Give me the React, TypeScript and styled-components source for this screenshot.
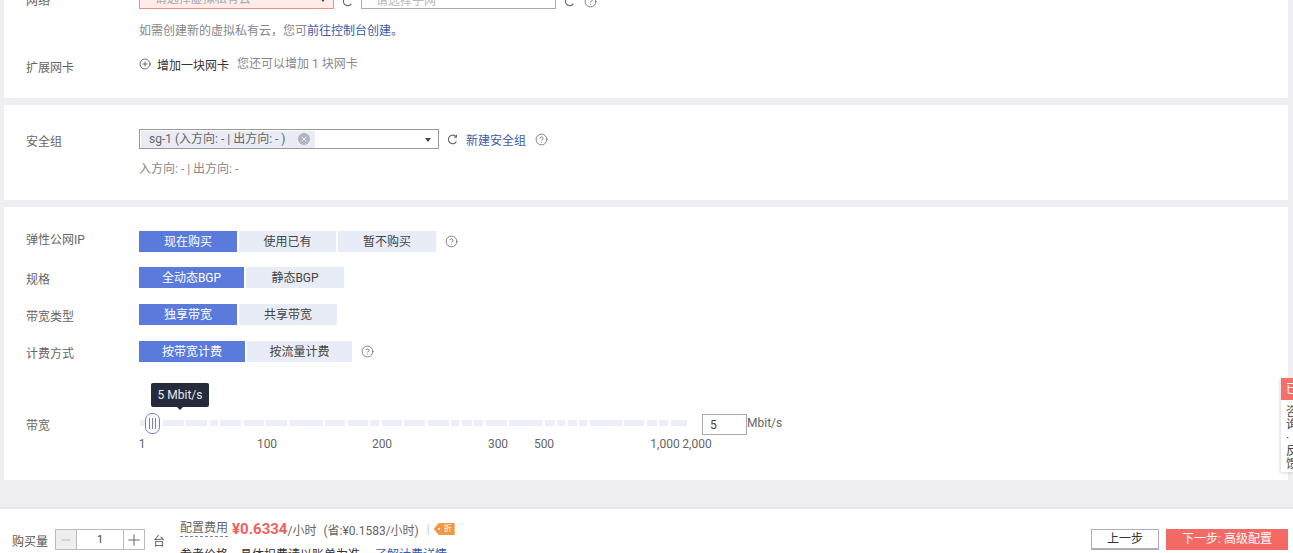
import React from "react";
import styled, { createGlobalStyle } from "styled-components";
import { CircleHelp, CirclePlus, X, Minus, Plus } from "lucide-react";

const Global = createGlobalStyle`
  html, body { margin: 0; padding: 0; height: 553px; overflow: hidden; background: #eeeef3; }
  body { font-family: Roboto, "Noto Sans CJK SC", "Liberation Sans", sans-serif; font-size: 12px; color: #666; }
  * { box-sizing: border-box; }
`;

const Page = styled.div`
  position: relative;
  width: 1293px;
  height: 553px;
  overflow: hidden;
  display: flex;
  flex-direction: column;
`;
const Main = styled.main`
  height: 527px;
  margin-top: -20px;
  padding: 0 5px 0 4px;
  display: flex;
  flex-direction: column;
  gap: 7px;
  flex: none;
`;
const Card = styled.section<{ $h: number; $pt: number }>`
  height: ${(p) => p.$h}px;
  padding: ${(p) => p.$pt}px 0 0 22px;
  background: #fff;
  flex: none;
  display: flex;
  flex-direction: column;
`;
const Field = styled.div<{ $mt?: number; $h?: number }>`
  display: flex;
  align-items: flex-start;
  margin-top: ${(p) => p.$mt ?? 0}px;
  height: ${(p) => (p.$h ? `${p.$h}px` : "auto")};
`;
const Label = styled.div<{ $pt?: number }>`
  width: 113px;
  flex: none;
  padding-top: ${(p) => p.$pt ?? 0}px;
  line-height: 18px;
  color: #666;
`;
const Controls = styled.div<{ $end?: boolean }>`
  display: flex;
  align-items: ${(p) => (p.$end ? "flex-end" : "center")};
`;
const Select = styled.div<{ $w: number; $h: number; $error?: boolean }>`
  width: ${(p) => p.$w}px;
  height: ${(p) => p.$h}px;
  display: flex;
  align-items: ${(p) => (p.$error ? "flex-end" : "center")};
  position: relative;
  padding: ${(p) => (p.$error ? "0 0 2px 8px" : "0 1px")};
  line-height: 14px;
  background: ${(p) => (p.$error ? "#fdecea" : "#fff")};
  border: 1px solid ${(p) => (p.$error ? "#ee8f80" : "#999")};
  color: ${(p) => (p.$error ? "#aaa" : "#666")};
`;
const Arrow = styled.span`
  position: absolute;
  right: 7px;
  bottom: 6px;
  width: 0;
  height: 0;
  border: 3px solid transparent;
  border-top: 4px solid #444;
  border-bottom: 0;
`;
const PlainInput = styled.div`
  width: 195px;
  height: 24px;
  margin-left: 8px;
  padding: 8px 0 0 14px;
  line-height: 14px;
  border: 1px solid #aaa;
  color: #bbb;
`;
const RefreshSvg = styled.svg<{ $mb?: number }>`
  width: 11px;
  height: 11px;
  margin: 0 0 ${(p) => p.$mb ?? 0}px 8px;
  color: #666;
  flex: none;
`;
const Refresh = ({ $mb }: { $mb?: number }) => (
  <RefreshSvg $mb={$mb} viewBox="0 0 11 11" fill="none" stroke="currentColor" strokeWidth="1.1">
    <path d="M9 2.6A4.3 4.3 0 1 0 9.4 7.6" />
    <path d="M9.4 0.8V3.2H7" />
  </RefreshSvg>
);
const Help = styled(CircleHelp).attrs({ strokeWidth: 1.5 })<{ $ml?: number; $mb?: number }>`
  width: 13px;
  height: 13px;
  margin: 0 0 ${(p) => p.$mb ?? 0}px ${(p) => p.$ml ?? 8}px;
  color: #666;
  flex: none;
`;
const Hint = styled.div<{ $mt?: number }>`
  margin-top: ${(p) => p.$mt ?? 0}px;
  line-height: 18px;
  color: #888;
`;
const Link = styled.a`
  color: #3e5aa8;
`;
const AddIcon = styled(CirclePlus).attrs({ strokeWidth: 1.5 })`
  width: 12px;
  height: 12px;
  margin-right: 6px;
  color: #444;
`;
const AddText = styled.span`
  color: #333;
  margin-right: 8px;
`;
const Tag = styled.div`
  height: 17px;
  padding: 0 5px 0 8px;
  display: flex;
  align-items: center;
  gap: 12px;
  line-height: 17px;
  background: #e9ecf4;
  white-space: nowrap;
`;
const TagClose = styled.span`
  width: 12px;
  height: 12px;
  border-radius: 50%;
  background: #b0b4be;
  display: flex;
  align-items: center;
  justify-content: center;
  color: #e9ecf4;
`;
const NewLink = styled(Link)`
  margin-left: 8px;
`;
const ToggleRow = styled.div`
  display: flex;
  align-items: center;
  gap: 2px;
`;
const Toggle = styled.button<{ $w: number; $on?: boolean }>`
  width: ${(p) => p.$w}px;
  height: 21px;
  padding: 1px 0 0;
  border: 0;
  font: inherit;
  line-height: 20px;
  text-align: center;
  background: ${(p) => (p.$on ? "#5b7bdc" : "#e8ecf7")};
  color: ${(p) => (p.$on ? "#fff" : "#444")};
`;
const SliderWrap = styled.div`
  position: relative;
  width: 548px;
  height: 40px;
  flex: none;
`;
const Track = styled.div`
  position: absolute;
  left: 1px;
  right: 0;
  top: 6px;
  height: 6px;
  display: flex;
  gap: 2.5px;
  overflow: hidden;
`;
const Segment = styled.span<{ $w: number }>`
  flex: none;
  width: ${(p) => p.$w}px;
  background: #ebeef9;
`;
const Handle = styled.div`
  position: absolute;
  left: 6px;
  top: -1px;
  width: 15px;
  height: 21px;
  border: 1.5px solid #6a86c9;
  border-radius: 7px;
  background: #fff;
  display: flex;
  align-items: center;
  justify-content: center;
  gap: 1.5px;
`;
const Grip = styled.i`
  display: block;
  width: 1.5px;
  height: 11px;
  background: #6a86c9;
`;
const Tooltip = styled.div`
  position: absolute;
  left: 12px;
  top: -31px;
  width: 58px;
  height: 24px;
  border-radius: 2px;
  background: #252b3a;
  color: #e6e8ee;
  line-height: 24px;
  text-align: center;
  &::after {
    content: "";
    position: absolute;
    left: 26px;
    top: 24px;
    border: 3px solid transparent;
    border-top-color: #252b3a;
    border-bottom: 0;
  }
`;
const Tick = styled.span<{ $x: number }>`
  position: absolute;
  top: 22px;
  left: ${(p) => p.$x}px;
  transform: translateX(-50%);
  line-height: 16px;
  color: #666;
  white-space: nowrap;
`;
const BandInput = styled.div`
  width: 45px;
  height: 21px;
  margin-left: 15px;
  padding-left: 7px;
  line-height: 20px;
  border: 1px solid #aaa;
  color: #444;
  flex: none;
`;
const Unit = styled.span`
  line-height: 18px;
  color: #666;
`;
const Footer = styled.footer`
  height: 46px;
  flex: none;
  border-top: 2px solid #e6e6ec;
  background: #fff;
  display: flex;
  overflow: hidden;
  padding: 19px 5px 0 12px;
  align-items: flex-start;
`;
const Qty = styled.span`
  padding-top: 1px;
  line-height: 26px;
  color: #555;
  margin-right: 7px;
`;
const Stepper = styled.div`
  width: 90px;
  height: 21px;
  margin-top: 1px;
  border: 1px solid #bbb;
  display: flex;
  flex: none;
`;
const StepBtn = styled.span<{ $off?: boolean }>`
  width: 20px;
  flex: none;
  display: flex;
  align-items: center;
  justify-content: center;
  background: ${(p) => (p.$off ? "#eee" : "#fff")};
  color: ${(p) => (p.$off ? "#aaa" : "#555")};
`;
const StepValue = styled.span`
  flex: 1;
  border-left: 1px solid #bbb;
  border-right: 1px solid #bbb;
  text-align: center;
  line-height: 20px;
  font-size: 11px;
  color: #444;
`;
const Tai = styled.span`
  width: 27px;
  margin-left: 8px;
  padding-top: 1px;
  line-height: 26px;
  color: #555;
  flex: none;
`;
const Price = styled.div`
  flex: 1;
  margin-top: -11px;
`;
const PriceLine = styled.div`
  display: flex;
  align-items: center;
  height: 24px;
  color: #666;
  white-space: nowrap;
`;
const Dotted = styled.span`
  border-bottom: 1px dashed #888;
  line-height: 15px;
  margin-right: 4px;
`;
const Amount = styled.strong`
  font-size: 15px;
  color: #ef5f5f;
  font-weight: 700;
`;
const Save = styled.span`
  margin-left: 7px;
`;
const Sep = styled.span`
  margin: 0 4px 0 8px;
  color: #ccc;
`;
const Badge = styled.span`
  width: 21px;
  height: 12px;
  position: relative;
  background: #f09a45;
  color: #fff;
  font-size: 8px;
  line-height: 12px;
  text-align: right;
  padding-right: 3px;
  clip-path: polygon(5px 0, 100% 0, 100% 100%, 5px 100%, 0 50%);
  &::before {
    content: "";
    position: absolute;
    left: 4px;
    top: 5px;
    width: 2px;
    height: 2px;
    border-radius: 50%;
    background: #fff;
  }
`;
const NoteLine = styled.div`
  margin-top: 5px;
  line-height: 18px;
  color: #333;
  white-space: nowrap;
`;
const NoteLink = styled(Link)`
  margin-left: 3px;
`;
const BackBtn = styled.button`
  width: 68px;
  height: 21px;
  padding: 0;
  margin-top: 1px;
  border: 1px solid #a9aeb8;
  border-bottom-width: 2px;
  background: #fff;
  font: inherit;
  line-height: 18px;
  color: #333;
  flex: none;
`;
const NextBtn = styled.button`
  width: 122px;
  height: 21px;
  padding: 0;
  margin: 1px 0 0 7px;
  border: 0;
  background: #f36a64;
  color: #fff;
  font: inherit;
  line-height: 21px;
  flex: none;
`;
const Side = styled.aside`
  position: absolute;
  left: 1281px;
  top: 378px;
  width: 12px;
  height: 94px;
  background: #fff;
  box-shadow: -1px 1px 3px rgba(0, 0, 0, 0.15);
  overflow: hidden;
  color: #444;
  line-height: 13px;
`;
const SideHead = styled.div`
  height: 22px;
  background: #f56e6a;
  color: #fff;
  line-height: 22px;
  padding-left: 5px;
  white-space: nowrap;
`;
const SideText = styled.div`
  padding: 6px 0 0 5px;
  width: 17px;
`;

const segs = [20, 21, 21, 8, 21, 20, 21, 33, 20, 20, 9, 20, 21, 21, 8, 10, 9, 21, 33, 10, 8, 9, 8, 32, 20, 10, 9, 20];
const ticks: [string, number][] = [["1", 3], ["100", 128], ["200", 243], ["300", 359], ["500", 405], ["1,000", 526], ["2,000", 558]];

export default function App() {
  return (
    <Page>
      <Global />
      <Main>
        <Card $h={118} $pt={5}>
          <Field>
            <Label $pt={7}>网络</Label>
            <Controls $end>
              <Select $w={195} $h={24} $error>
                <span>--请选择虚拟私有云--</span>
                <Arrow />
              </Select>
              <Refresh $mb={2} />
              <PlainInput>请选择子网</PlainInput>
              <Refresh $mb={2} />
              <Help $ml={9} $mb={1} />
            </Controls>
          </Field>
          <Field $mt={12}>
            <Label />
            <Hint>如需创建新的虚拟私有云，您可<Link>前往控制台创建。</Link></Hint>
          </Field>
          <Field $mt={15}>
            <Label $pt={4}>扩展网卡</Label>
            <Controls>
              <AddIcon />
              <AddText>增加一块网卡</AddText>
              <Hint>您还可以增加 1 块网卡</Hint>
            </Controls>
          </Field>
        </Card>
        <Card $h={95} $pt={24}>
          <Field $h={22}>
            <Label $pt={4}>安全组</Label>
            <Controls>
              <Select $w={300} $h={20}>
                <Tag>
                  sg-1 (入方向: - | 出方向: - )
                  <TagClose><X size={8} strokeWidth={3} /></TagClose>
                </Tag>
                <Arrow />
              </Select>
              <Refresh />
              <NewLink>新建安全组</NewLink>
              <Help $ml={9} />
            </Controls>
          </Field>
          <Field $mt={9}>
            <Label />
            <Hint>入方向: - | 出方向: -</Hint>
          </Field>
        </Card>
        <Card $h={273} $pt={24}>
          <Field $h={21}>
            <Label>弹性公网IP</Label>
            <ToggleRow>
              <Toggle $w={98} $on>现在购买</Toggle>
              <Toggle $w={97}>使用已有</Toggle>
              <Toggle $w={98}>暂不购买</Toggle>
              <Help $ml={7} />
            </ToggleRow>
          </Field>
          <Field $mt={15} $h={21}>
            <Label $pt={4}>规格</Label>
            <ToggleRow>
              <Toggle $w={105} $on>全动态BGP</Toggle>
              <Toggle $w={98}>静态BGP</Toggle>
            </ToggleRow>
          </Field>
          <Field $mt={16} $h={21}>
            <Label $pt={4}>带宽类型</Label>
            <ToggleRow>
              <Toggle $w={98} $on>独享带宽</Toggle>
              <Toggle $w={98}>共享带宽</Toggle>
            </ToggleRow>
          </Field>
          <Field $mt={16} $h={21}>
            <Label $pt={4}>计费方式</Label>
            <ToggleRow>
              <Toggle $w={106} $on>按带宽计费</Toggle>
              <Toggle $w={105}>按流量计费</Toggle>
              <Help $ml={7} />
            </ToggleRow>
          </Field>
          <Field $mt={52} $h={40}>
            <Label $pt={3}>带宽</Label>
            <SliderWrap>
              <Track>
                {segs.map((w, i) => <Segment key={i} $w={w} />)}
              </Track>
              <Handle><Grip /><Grip /><Grip /></Handle>
              <Tooltip>5 Mbit/s</Tooltip>
              {ticks.map(([t, x]) => <Tick key={t} $x={x}>{t}</Tick>)}
            </SliderWrap>
            <BandInput>5</BandInput>
            <Unit>Mbit/s</Unit>
          </Field>
        </Card>
      </Main>
      <Footer>
        <Qty>购买量</Qty>
        <Stepper>
          <StepBtn $off><Minus size={14} strokeWidth={1.2} /></StepBtn>
          <StepValue>1</StepValue>
          <StepBtn><Plus size={18} strokeWidth={1.2} /></StepBtn>
        </Stepper>
        <Tai>台</Tai>
        <Price>
          <PriceLine>
            <Dotted>配置费用</Dotted>
            <Amount>¥0.6334</Amount>/小时
            <Save>(省:¥0.1583/小时)</Save>
            <Sep>|</Sep>
            <Badge>折</Badge>
          </PriceLine>
          <NoteLine>参考价格，具体扣费请以账单为准。<NoteLink>了解计费详情</NoteLink></NoteLine>
        </Price>
        <BackBtn>上一步</BackBtn>
        <NextBtn>下一步: 高级配置</NextBtn>
      </Footer>
      <Side>
        <SideHead>已</SideHead>
        <SideText>咨询·反馈</SideText>
      </Side>
    </Page>
  );
}
